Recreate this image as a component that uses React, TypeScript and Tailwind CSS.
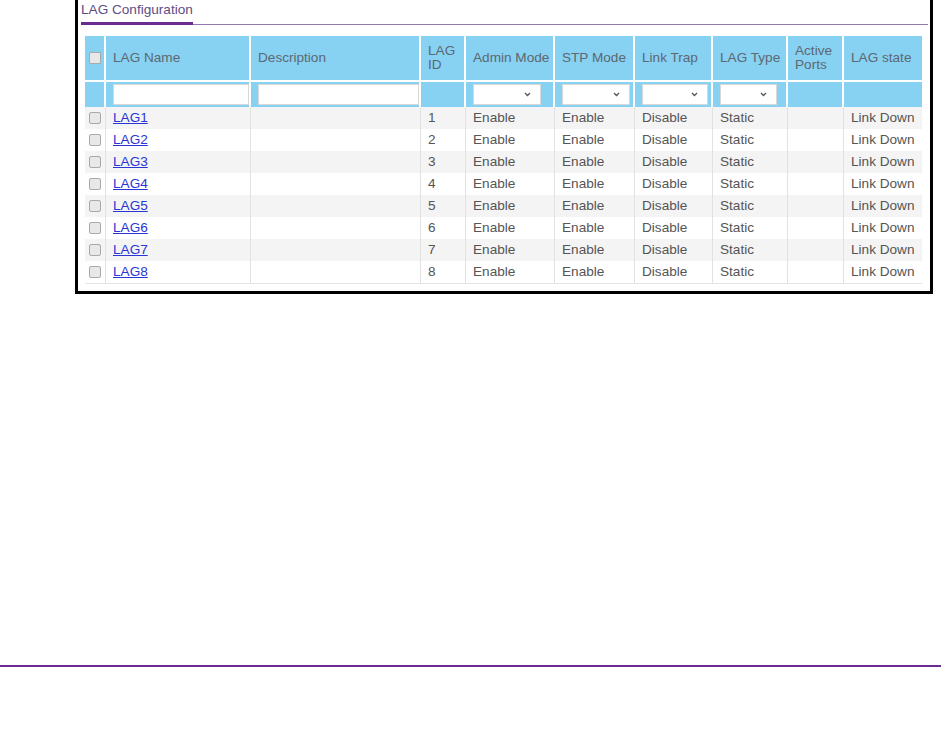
import React from "react";

const cols = "grid grid-cols-[21px_145px_170px_45px_89px_80px_78px_75px_56px_78px]";

const headers: { label: React.ReactNode; filter?: "input" | "select"; selW?: string }[] = [
  { label: "LAG Name", filter: "input" },
  { label: "Description", filter: "input" },
  { label: <>LAG<br />ID</> },
  { label: "Admin Mode", filter: "select", selW: "w-[68px]" },
  { label: "STP Mode", filter: "select", selW: "w-[68px]" },
  { label: "Link Trap", filter: "select", selW: "w-[66px]" },
  { label: "LAG Type", filter: "select", selW: "w-[57px]" },
  { label: <>Active<br />Ports</> },
  { label: "LAG state" },
];

const rows = [1, 2, 3, 4, 5, 6, 7, 8].map((n) => ({
  name: `LAG${n}`,
  description: "",
  id: n,
  admin: "Enable",
  stp: "Enable",
  trap: "Disable",
  type: "Static",
  ports: "",
  state: "Link Down",
}));

const Checkbox = () => (
  <span className="block w-[12px] h-[12px] rounded-[2px] border border-[#a9a9a9] bg-[#e8e8e8]" />
);

const Chevron = () => (
  <svg width="7" height="5" viewBox="0 0 7 5" className="text-[#555]">
    <path d="M1 1l2.5 2.5L6 1" fill="none" stroke="currentColor" strokeWidth="1.3" />
  </svg>
);

const FakeSelect = ({ width }: { width: string }) => (
  <div className={`${width} h-[21px] bg-white border border-[#d8d8d8] flex items-center justify-end pr-[9px]`}>
    <Chevron />
  </div>
);

export default function App() {
  return (
    <div className="w-[941px] h-[734px] bg-white font-['Liberation_Sans',Arial,sans-serif] text-[13.6px]">
      <div className="ml-[75px] w-[858px] h-[294px] border-x-[3px] border-b-[3px] border-black pl-[3px] pr-[2px]">
        {/* title tab */}
        <div className="flex items-end">
          <div className="w-[112px] h-[25px] border-b-[3px] border-[#6b2c91] pt-[2px] leading-[16px] text-[#5e4d86] whitespace-nowrap">
            LAG Configuration
          </div>
          <div className="flex-1 border-b border-[#9378ad]" />
        </div>

        <div className="ml-[4px] mt-[11px] w-[837px]">
          {/* header */}
          <div className={`${cols} h-[46px] text-[#5d6870]`}>
            <div className="bg-[#87d1f3] border-r-2 border-b-2 border-white flex items-center justify-center">
              <Checkbox />
            </div>
            {headers.map((h, i) => (
              <div
                key={i}
                className={`bg-[#87d1f3] border-b-2 border-white pl-[7px] flex items-center leading-[14px] ${i < headers.length - 1 ? "border-r-2" : ""}`}
              >
                {h.label}
              </div>
            ))}
          </div>

          {/* filter row */}
          <div className={`${cols} h-[25px]`}>
            <div className="bg-[#87d1f3] border-r-2 border-white" />
            {headers.map((h, i) => (
              <div
                key={i}
                className={`bg-[#87d1f3] border-white flex items-center pl-[7px] ${i < headers.length - 1 ? "border-r-2" : ""}`}
              >
                {h.filter === "input" && (
                  <input className="w-full h-[21px] bg-white border border-[#d8d8d8] outline-none" />
                )}
                {h.filter === "select" && <FakeSelect width={h.selW ?? "w-[68px]"} />}
              </div>
            ))}
          </div>

          {/* body */}
          <div className="border-b border-[#e4e4e4] text-[#555]">
            {rows.map((r, idx) => {
              const cells = [r.id, r.admin, r.stp, r.trap, r.type, r.ports, r.state];
              return (
                <div key={r.name} className={`${cols} h-[22px] ${idx % 2 === 0 ? "bg-[#f4f4f4]" : "bg-white"}`}>
                  <div className="border-r border-[#e2e2e2] flex items-center justify-center">
                    <Checkbox />
                  </div>
                  <div className="border-r border-[#e2e2e2] pl-[7px] pt-[1px] flex items-center">
                    <a href="#" className="text-[#2a35d6] underline">{r.name}</a>
                  </div>
                  <div className="border-r border-[#e2e2e2] pl-[7px] flex items-center">{r.description}</div>
                  {cells.map((c, j) => (
                    <div
                      key={j}
                      className={`pl-[7px] pt-[1px] flex items-center whitespace-nowrap ${j < cells.length - 1 ? "border-r border-[#e2e2e2]" : ""}`}
                    >
                      {c}
                    </div>
                  ))}
                </div>
              );
            })}
          </div>
        </div>
      </div>

      <div className="mt-[371px] h-[2px] bg-[#6b2c91]" />
    </div>
  );
}
